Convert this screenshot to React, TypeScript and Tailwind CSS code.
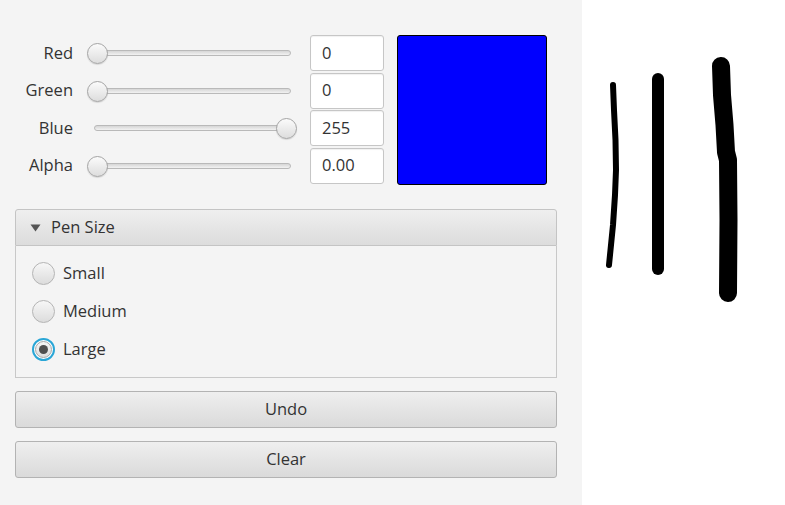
import React from "react";

const rows = [
  { label: "Red", value: "0", pos: 0 },
  { label: "Green", value: "0", pos: 0 },
  { label: "Blue", value: "255", pos: 1 },
  { label: "Alpha", value: "0.00", pos: 0 },
];

const sizes = [
  { label: "Small", checked: false },
  { label: "Medium", checked: false },
  { label: "Large", checked: true },
];

const Slider = ({ pos }: { pos: number }) => (
  <div className="relative h-[36px] w-[211px]">
    <div className="absolute left-[7px] right-[7px] top-[15px] h-[6px] rounded-full border border-[#b9b9b9] bg-gradient-to-b from-[#d6d6d6] to-[#f2f2f2]" />
    <div
      className="absolute top-[8px] h-[21px] w-[21px] rounded-full border border-[#a4a4a4] bg-gradient-to-b from-[#fbfbfb] to-[#dddddd] shadow-[0_1px_1px_rgba(0,0,0,0.12)]"
      style={{ left: pos ? 189 : 0 }}
    />
  </div>
);

const Radio = ({ checked }: { checked: boolean }) =>
  checked ? (
    <div className="flex h-[23px] w-[23px] items-center justify-center rounded-full border-2 border-[#2aa6d6] bg-white">
      <div className="flex h-[17px] w-[17px] items-center justify-center rounded-full border border-[#a8a8a8] bg-gradient-to-b from-[#f6f6f6] to-[#dedede]">
        <div className="h-[9px] w-[9px] rounded-full bg-[#4f4f4f]" />
      </div>
    </div>
  ) : (
    <div className="h-[23px] w-[23px] rounded-full border border-[#b4b4b4] bg-gradient-to-b from-[#f7f7f7] to-[#dcdcdc]" />
  );

const Button = ({ children }: { children: React.ReactNode }) => (
  <div className="flex h-[37px] w-[542px] items-center justify-center rounded-[3px] border border-[#b3b3b3] bg-gradient-to-b from-[#efefef] to-[#dadada] text-[16.5px] text-[#333]">
    {children}
  </div>
);

export default function App() {
  return (
    <div
      className="flex h-[505px] w-[785px] overflow-hidden bg-white"
      style={{ fontFamily: '"Open Sans", "Noto Sans", sans-serif' }}
    >
      <div className="flex w-[582px] shrink-0 flex-col bg-[#f4f4f4] pl-[15px] pt-[35px]">
        <div className="flex">
          <div className="flex flex-col gap-[1px]">
            {rows.map(r => (
              <div key={r.label} className="flex h-[36.5px] items-center">
                <div className="w-[59px] pr-[1px] text-right text-[16.5px] text-[#333]">{r.label}</div>
                <div className="ml-[13px]">
                  <Slider pos={r.pos} />
                </div>
                <div className="ml-[12px] flex h-[36px] w-[74px] items-center rounded-[3px] border border-[#c6c6c6] bg-white pl-[11px] text-[16.5px] text-[#333] shadow-[inset_0_1px_1px_rgba(0,0,0,0.06)]">
                  {r.value}
                </div>
              </div>
            ))}
          </div>
          <div className="ml-[13px] h-[150px] w-[150px] rounded-[3px] border border-black bg-[#0000ff]" />
        </div>

        <div className="mt-[24px] w-[542px]">
          <div className="flex h-[37px] items-center rounded-t-[3px] border border-[#c4c4c4] bg-gradient-to-b from-[#efefef] to-[#dcdcdc] pl-[14px] text-[16.5px] text-[#333]">
            <svg width="11" height="8" viewBox="0 0 11 8" className="mr-[10px]">
              <path d="M0.5 0.5 L10.5 0.5 L5.5 7.5 Z" fill="#555" />
            </svg>
            Pen Size
          </div>
          <div className="flex h-[132px] flex-col gap-[15px] border border-t-0 border-[#c8c8c8] bg-[#f4f4f4] pl-[16px] pt-[16px]">
            {sizes.map(s => (
              <div key={s.label} className="flex h-[23px] items-center gap-[8px] text-[16.5px] text-[#333]">
                <Radio checked={s.checked} />
                {s.label}
              </div>
            ))}
          </div>
        </div>

        <div className="mt-[13px] flex flex-col gap-[13px]">
          <Button>Undo</Button>
          <Button>Clear</Button>
        </div>
      </div>

      <div className="relative flex-1 bg-white">
        <svg width="203" height="505" viewBox="582 0 203 505" className="absolute left-0 top-0">
          <path
            d="M613 85 L614 110 L615.5 140 L616 170 L615 195 L613 225 L610.5 250 L609 265"
            stroke="black"
            strokeWidth="6"
            strokeLinecap="round"
            strokeLinejoin="round"
            fill="none"
          />
          <path d="M658 79 L658 269" stroke="black" strokeWidth="12" strokeLinecap="round" fill="none" />
          <path
            d="M721 66 L722 95 L724.5 125 L726 152 L728 160 L728.5 220 L728 293"
            stroke="black"
            strokeWidth="18"
            strokeLinecap="round"
            strokeLinejoin="round"
            fill="none"
          />
        </svg>
      </div>
    </div>
  );
}
